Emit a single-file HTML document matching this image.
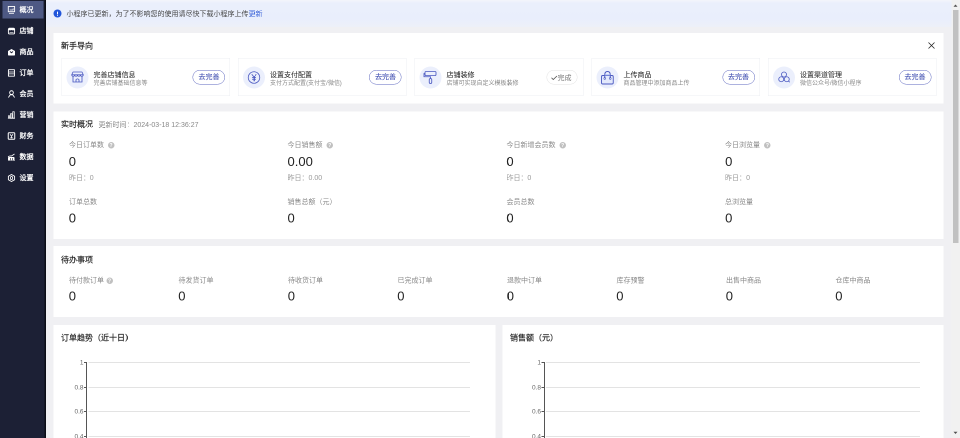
<!DOCTYPE html>
<html lang="zh-CN"><head><meta charset="utf-8">
<style>
html,body{margin:0;padding:0;width:960px;height:438px;overflow:hidden;background:#f0f0f3;}
*{box-sizing:border-box;}
#w{position:absolute;left:0;top:0;width:1920px;height:876px;transform:scale(0.5);transform-origin:0 0;will-change:transform;font-family:"Liberation Sans",sans-serif;color:#333;background:#f0f0f3;overflow:hidden;}
.abs{position:absolute;}
#side{position:absolute;left:0;top:0;width:92px;height:876px;background:#1c2035;border-right:3px solid #0b0d16;}
.nav{position:absolute;left:5px;width:82px;height:35px;}
.nav.on{background:#4e5984;}
.nav svg{position:absolute;left:10px;top:9.5px;width:16px;height:16px;}
.nav span{position:absolute;left:34px;top:0;line-height:35px;font-size:14px;font-weight:bold;color:#fff;}
#notice{position:absolute;left:92px;top:0;width:1811px;height:54px;background:linear-gradient(#f3f5fb 0px,#eaeffc 6px,#e9eefc 38px,#edf0f8 54px);}
.ntxt{left:41px;top:17px;font-size:14px;line-height:20px;color:#444;white-space:nowrap;}
.card{position:absolute;left:107px;width:1780px;background:#fff;overflow:hidden;}
.ttl{position:absolute;left:15px;font-size:16px;line-height:20px;color:#222;-webkit-text-stroke:0.3px #222;}
.upd{left:90px;top:16px;font-size:14px;line-height:20px;color:#888;}
.gc{position:absolute;top:50px;width:337.2px;height:76px;border:1px solid #eceef3;background:#fff;}
.gi{position:absolute;left:9px;top:16px;width:44px;height:44px;border-radius:50%;background:#ebeffc;}
.gi svg{position:absolute;left:0;top:0;}
.gt{position:absolute;left:63px;top:21.5px;font-size:14px;line-height:20px;color:#2a2a2a;-webkit-text-stroke:0.1px #2a2a2a;}
.gs{position:absolute;left:63px;top:40px;font-size:12px;line-height:18px;color:#888;}
.btn{position:absolute;right:9px;top:23px;width:65px;height:29px;border:1.6px solid #5a64be;border-radius:15px;color:#3d4cb0;-webkit-text-stroke:0.15px #3d4cb0;font-size:14px;line-height:25.5px;text-align:center;}
.btn.done{border-color:#e0e0e0;color:#777;-webkit-text-stroke:0;width:62px;text-align:left;right:11px;}
.sl{position:absolute;font-size:14px;line-height:20px;color:#888;white-space:nowrap;}
.q{display:inline-block;width:13px;height:13px;border-radius:50%;background:#c0c0c0;color:#fff;font-size:10px;line-height:13px;text-align:center;font-weight:bold;margin-left:5px;vertical-align:0px;}
.sv{position:absolute;font-size:26px;line-height:30px;color:#222;}
.sy{position:absolute;font-size:14px;line-height:18px;color:#999;margin-top:1.5px;}
.gl{position:absolute;height:2px;background:#e3e3e3;}
.tk{position:absolute;width:5px;height:2px;background:#555;}
.ax{position:absolute;width:2px;height:200px;background:#555;}
.yl{position:absolute;width:56px;text-align:right;font-size:13px;line-height:18px;color:#666;}

</style></head><body>
<div id="w">
  <div id="side">
<div class="nav on" style="top:2px"><svg viewBox="0 0 16 16"><rect x="1.6" y="1" width="12.6" height="10.4" fill="none" stroke="#fff" stroke-width="1.8"/><path d="M4.5 8 H11 L11.5 5" stroke="#fff" stroke-width="1.6" fill="none"/><path d="M3 14.6 H13" stroke="#fff" stroke-width="1.6"/></svg><span>概况</span></div>
<div class="nav" style="top:44px"><svg viewBox="0 0 16 16"><rect x="1.8" y="2.3" width="12.4" height="11.6" rx="2.5" fill="none" stroke="#fff" stroke-width="1.8"/><rect x="2" y="2.5" width="12" height="4.5" rx="2" fill="#fff"/><circle cx="5" cy="7.2" r="1.1" fill="#1c2035"/><circle cx="8" cy="7.2" r="1.1" fill="#1c2035"/><circle cx="11" cy="7.2" r="1.1" fill="#1c2035"/><path d="M4 10.8 H12" stroke="#fff" stroke-width="1.2"/></svg><span>店铺</span></div>
<div class="nav" style="top:86px"><svg viewBox="0 0 16 16"><path d="M1 6 L8 2 L15 6 V13.5 Q15 15 13.5 15 H2.5 Q1 15 1 13.5 Z" fill="#fff"/><path d="M5 7 L8 9.5 L11 7" stroke="#1c2035" stroke-width="1.8" fill="none"/><circle cx="4" cy="2.5" r="1.2" fill="#1c2035"/><circle cx="12" cy="2.5" r="1.2" fill="#1c2035"/></svg><span>商品</span></div>
<div class="nav" style="top:128px"><svg viewBox="0 0 16 16"><rect x="1.9" y="1.4" width="12" height="13" rx="0.5" fill="none" stroke="#fff" stroke-width="1.9"/><path d="M3 6 H13 M3 9.8 H13" stroke="#fff" stroke-width="1.5"/></svg><span>订单</span></div>
<div class="nav" style="top:170px"><svg viewBox="0 0 16 16"><circle cx="8" cy="5.2" r="3.7" fill="none" stroke="#fff" stroke-width="1.8"/><path d="M1.8 15 L5.5 9.5 H10.5 L14.2 15" fill="none" stroke="#fff" stroke-width="1.8" stroke-linejoin="round"/></svg><span>会员</span></div>
<div class="nav" style="top:212px"><svg viewBox="0 0 16 16"><path d="M0.8 14.4 H15" stroke="#fff" stroke-width="1.6"/><rect x="1.5" y="8.5" width="3" height="6" fill="#fff"/><rect x="6" y="5.5" width="3" height="9" fill="none" stroke="#fff" stroke-width="1.5"/><rect x="10.5" y="1.5" width="3" height="13" fill="none" stroke="#fff" stroke-width="1.5"/></svg><span>营销</span></div>
<div class="nav" style="top:254px"><svg viewBox="0 0 16 16"><rect x="1.5" y="1.5" width="13" height="13" rx="1.5" fill="none" stroke="#fff" stroke-width="2"/><path d="M5 4.5 L8 8.5 L11 4.5 M8 8 V12.5 M5.5 11.5 H10.5" stroke="#fff" stroke-width="1.6" fill="none"/></svg><span>财务</span></div>
<div class="nav" style="top:296px"><svg viewBox="0 0 16 16"><path d="M1 14.5 H15" stroke="#fff" stroke-width="1.2"/><path d="M1 7.5 Q4 5.5 8 6 L14 2" stroke="#fff" stroke-width="1.6" fill="none"/><rect x="1" y="8" width="13" height="6.5" rx="1.5" fill="#fff"/><rect x="5" y="10" width="1.2" height="4.5" fill="#1c2035"/><rect x="9" y="10" width="1.2" height="4.5" fill="#1c2035"/></svg><span>数据</span></div>
<div class="nav" style="top:338px"><svg viewBox="0 0 16 16"><path d="M8 1 L14.2 4.5 V11.5 L8 15 L1.8 11.5 V4.5 Z" fill="none" stroke="#fff" stroke-width="1.8"/><ellipse cx="8" cy="8" rx="2.3" ry="3.3" fill="none" stroke="#fff" stroke-width="1.6"/></svg><span>设置</span></div>
  </div>
  <div id="notice">
    <div class="abs" style="left:15px;top:19px;width:16px;height:16px;border-radius:50%;background:#2155da;"><div class="abs" style="left:7px;top:3.5px;width:2px;height:6px;background:#fff;border-radius:1px"></div><div class="abs" style="left:7px;top:11px;width:2px;height:2px;background:#fff;border-radius:1px"></div></div>
    <div class="abs ntxt">小程序已更新，为了不影响您的使用请尽快下载小程序上传<span style="color:#3a63d8">更新</span></div>
  </div>
  <div class="card" style="top:66px;height:141px;">
    <div class="ttl" style="top:16px;">新手导向</div>
    <svg class="abs" style="left:1749px;top:18px" width="14" height="14" viewBox="0 0 14 14"><path d="M1 1 L13 13 M13 1 L1 13" stroke="#222" stroke-width="1.5"/></svg>
<div class="gc" style="left:16.0px"><div class="gi"><svg viewBox="0 0 44 44" width="44" height="44"><path d="M13 11 H31 L33.5 16.5 H10.5 Z" fill="none" stroke="#4a58c0" stroke-width="1.6" stroke-linejoin="round"/><path d="M10.5 16.5 Q10.5 19.5 13.4 19.5 Q16.3 19.5 16.3 16.5 Q16.3 19.5 19.1 19.5 Q22 19.5 22 16.5 Q22 19.5 24.9 19.5 Q27.7 19.5 27.7 16.5 Q27.7 19.5 30.6 19.5 Q33.5 19.5 33.5 16.5" fill="none" stroke="#4a58c0" stroke-width="1.6"/><path d="M13 19 V31 H31 V19 M19 31 V26.5 Q22 23 25 26.5 V31" fill="none" stroke="#4a58c0" stroke-width="1.7"/></svg></div><div class="gt">完善店铺信息</div><div class="gs">完善店铺基础信息等</div><div class="btn">去完善</div></div>
<div class="gc" style="left:369.2px"><div class="gi"><svg viewBox="0 0 44 44" width="44" height="44"><circle cx="22" cy="22" r="11.5" fill="none" stroke="#4a58c0" stroke-width="1.6"/><path d="M17.5 15.5 L22 21 L26.5 15.5 M22 21 V29.5 M18 22 H26 M18 25.5 H26" fill="none" stroke="#4a58c0" stroke-width="1.7"/></svg></div><div class="gt">设置支付配置</div><div class="gs">支付方式配置(支付宝/微信)</div><div class="btn">去完善</div></div>
<div class="gc" style="left:722.4px"><div class="gi"><svg viewBox="0 0 44 44" width="44" height="44"><path d="M13 10 H31 Q33 10 33 12 V16 Q33 18 31 18 H13 Q11 18 11 16 V12 Q11 10 13 10 Z" fill="none" stroke="#4a58c0" stroke-width="1.7"/><path d="M11 14 H9 V20.5 H22 V24" fill="none" stroke="#4a58c0" stroke-width="1.7"/><rect x="19.5" y="24" width="5" height="10" rx="2.5" fill="none" stroke="#4a58c0" stroke-width="1.7"/></svg></div><div class="gt">店铺装修</div><div class="gs">店铺可实现自定义模板装修</div><div class="btn done"><svg viewBox="0 0 13 12" style="position:absolute;left:8px;top:8px;width:13px;height:12px"><path d="M1 6.5 L4.5 10 L12 3" fill="none" stroke="#555" stroke-width="1.7"/></svg><span style="position:absolute;left:21px;top:1.5px">完成</span></div></div>
<div class="gc" style="left:1075.6px"><div class="gi"><svg viewBox="0 0 44 44" width="44" height="44"><rect x="10" y="18" width="23.5" height="17" rx="2.5" fill="#e3e9fc" stroke="#4a58c0" stroke-width="1.8"/><path d="M16.5 24 V16.5 Q16.5 10 22 10 Q27.5 10 27.5 16.5 V24" fill="none" stroke="#4a58c0" stroke-width="2"/><path d="M16.5 17 H27.5" stroke="#9fb0ee" stroke-width="2"/><circle cx="16.5" cy="24" r="1.7" fill="#fff" stroke="#4a58c0" stroke-width="1.4"/><circle cx="27.5" cy="24" r="1.7" fill="#fff" stroke="#4a58c0" stroke-width="1.4"/></svg></div><div class="gt">上传商品</div><div class="gs">商品管理中添加商品上传</div><div class="btn">去完善</div></div>
<div class="gc" style="left:1428.8px"><div class="gi"><svg viewBox="0 0 44 44" width="44" height="44"><circle cx="22" cy="16" r="5" fill="none" stroke="#4a58c0" stroke-width="1.6"/><circle cx="16.5" cy="25.5" r="5" fill="none" stroke="#4a58c0" stroke-width="1.6"/><circle cx="27.5" cy="25.5" r="5" fill="none" stroke="#4a58c0" stroke-width="1.6"/><path d="M31 29 L33.5 31.5" stroke="#4a58c0" stroke-width="1.6"/></svg></div><div class="gt">设置渠道管理</div><div class="gs">微信公众号/微信小程序</div><div class="btn">去完善</div></div>
  </div>
  <div class="card" style="top:223px;height:255px;">
    <div class="ttl" style="top:16px;">实时概况</div>
    <div class="abs upd">更新时间：2024-03-18 12:36:27</div>
<div class="sl" style="left:30.5px;top:56px">今日订单数<span class="q" style="margin-left:8px">?</span></div><div class="sv" style="left:30.5px;top:85px">0</div><div class="sy" style="left:30.5px;top:121px">昨日：0</div><div class="sl" style="left:30.5px;top:170px">订单总数</div><div class="sv" style="left:30.5px;top:198px">0</div>
<div class="sl" style="left:468.1px;top:56px">今日销售额<span class="q" style="margin-left:8px">?</span></div><div class="sv" style="left:468.1px;top:85px">0.00</div><div class="sy" style="left:468.1px;top:121px">昨日：0.00</div><div class="sl" style="left:468.1px;top:170px">销售总额（元）</div><div class="sv" style="left:468.1px;top:198px">0</div>
<div class="sl" style="left:905.7px;top:56px">今日新增会员数<span class="q" style="margin-left:8px">?</span></div><div class="sv" style="left:905.7px;top:85px">0</div><div class="sy" style="left:905.7px;top:121px">昨日：0</div><div class="sl" style="left:905.7px;top:170px">会员总数</div><div class="sv" style="left:905.7px;top:198px">0</div>
<div class="sl" style="left:1343.3000000000002px;top:56px">今日浏览量<span class="q" style="margin-left:8px">?</span></div><div class="sv" style="left:1343.3000000000002px;top:85px">0</div><div class="sy" style="left:1343.3000000000002px;top:121px">昨日：0</div><div class="sl" style="left:1343.3000000000002px;top:170px">总浏览量</div><div class="sv" style="left:1343.3000000000002px;top:198px">0</div>
  </div>
  <div class="card" style="top:492px;height:142px;">
    <div class="ttl" style="top:18px;">待办事项</div>
<div class="sl" style="left:30.5px;top:58px">待付款订单<span class="q">?</span></div><div class="sv" style="left:30.5px;top:85px">0</div>
<div class="sl" style="left:249.5px;top:58px">待发货订单</div><div class="sv" style="left:249.5px;top:85px">0</div>
<div class="sl" style="left:468.5px;top:58px">待收货订单</div><div class="sv" style="left:468.5px;top:85px">0</div>
<div class="sl" style="left:687.5px;top:58px">已完成订单</div><div class="sv" style="left:687.5px;top:85px">0</div>
<div class="sl" style="left:906.5px;top:58px">退款中订单</div><div class="sv" style="left:906.5px;top:85px">0</div>
<div class="sl" style="left:1125.5px;top:58px">库存预警</div><div class="sv" style="left:1125.5px;top:85px">0</div>
<div class="sl" style="left:1344.5px;top:58px">出售中商品</div><div class="sv" style="left:1344.5px;top:85px">0</div>
<div class="sl" style="left:1563.5px;top:58px">仓库中商品</div><div class="sv" style="left:1563.5px;top:85px">0</div>
  </div>
  <div class="card" style="top:650px;height:300px;width:884px;">
    <div class="ttl" style="top:16px;">订单趋势（近十日）</div>
    <div class="gl" style="left:70px;top:74px;width:763px"></div><div class="tk" style="left:61px;top:74px"></div><div class="yl" style="left:4px;top:66px">1</div><div class="gl" style="left:70px;top:123.5px;width:763px"></div><div class="tk" style="left:61px;top:123.5px"></div><div class="yl" style="left:4px;top:115.5px">0.8</div><div class="gl" style="left:70px;top:171.6px;width:763px"></div><div class="tk" style="left:61px;top:171.6px"></div><div class="yl" style="left:4px;top:163.6px">0.6</div><div class="gl" style="left:70px;top:222px;width:763px"></div><div class="tk" style="left:61px;top:222px"></div><div class="yl" style="left:4px;top:214px">0.4</div><div class="ax" style="left:65px;top:74px"></div>
  </div>
  <div class="card" style="top:650px;height:300px;left:1005px;width:882px;">
    <div class="ttl" style="top:16px;">销售额（元）</div>
    <div class="gl" style="left:87px;top:74px;width:748px"></div><div class="tk" style="left:78px;top:74px"></div><div class="yl" style="left:21px;top:66px">1</div><div class="gl" style="left:87px;top:123.5px;width:748px"></div><div class="tk" style="left:78px;top:123.5px"></div><div class="yl" style="left:21px;top:115.5px">0.8</div><div class="gl" style="left:87px;top:171.6px;width:748px"></div><div class="tk" style="left:78px;top:171.6px"></div><div class="yl" style="left:21px;top:163.6px">0.6</div><div class="gl" style="left:87px;top:222px;width:748px"></div><div class="tk" style="left:78px;top:222px"></div><div class="yl" style="left:21px;top:214px">0.4</div><div class="ax" style="left:83px;top:74px"></div>
  </div>
  <div class="abs" style="left:1903px;top:0;width:17px;height:876px;background:#f1f1f1;"></div>
  <div class="abs" style="left:1906px;top:20px;width:11px;height:466px;background:#c1c1c1;"></div>
  <svg class="abs" style="left:1906px;top:7px" width="10" height="8" viewBox="0 0 10 8"><path d="M1 6.5 L5 2 L9 6.5 Z" fill="#505050"/></svg>
  <svg class="abs" style="left:1906px;top:862px" width="10" height="8" viewBox="0 0 10 8"><path d="M1 1.5 L5 6 L9 1.5 Z" fill="#505050"/></svg>
</div>
</body></html>
